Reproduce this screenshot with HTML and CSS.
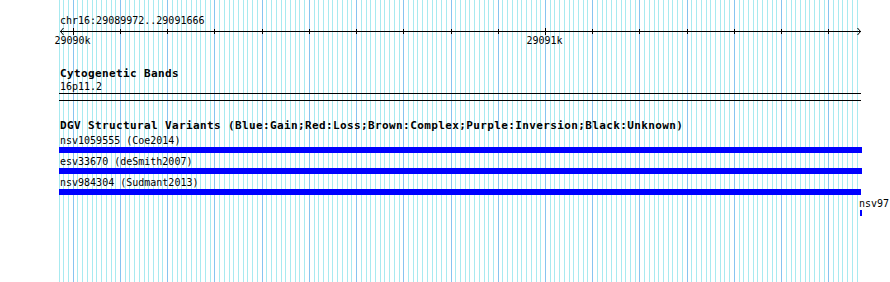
FILE: index.html
```html
<!DOCTYPE html>
<html lang="en">
<head>
    <meta charset="UTF-8">
    <title>chr16:29089972..29091666</title>
    <link rel="stylesheet" href="styles.css">
</head>
<body>
    <div class="panel">
        <svg class="grid" id="grid" width="890" height="282"></svg>

        <svg class="ruler" id="ruler" width="890" height="48">
            <text class="ruler-title" x="60" y="24">chr16:29089972..29091666</text>
            <rect x="60" y="31" width="801" height="1" fill="#000"/>
            <polyline points="63.5,28 60.5,31.5 63.5,35" fill="none" stroke="#000"/>
            <polyline points="857.5,28 860.5,31.5 857.5,35" fill="none" stroke="#000"/>
        </svg>

        <div class="track cyto">
            <div class="track-title">Cytogenetic Bands</div>
            <div class="feature-label">16p11.2</div>
            <div class="band"></div>
        </div>

        <div class="track dgv">
            <div class="track-title">DGV Structural Variants (Blue:Gain;Red:Loss;Brown:Complex;Purple:Inversion;Black:Unknown)</div>
            <div class="feature">
                <div class="feature-label">nsv1059555 (Coe2014)</div>
                <div class="feature-bar" style="margin-left: 59px; width: 803px;"></div>
            </div>
            <div class="feature">
                <div class="feature-label">esv33670 (deSmith2007)</div>
                <div class="feature-bar" style="margin-left: 59px; width: 803px;"></div>
            </div>
            <div class="feature">
                <div class="feature-label">nsv984304 (Sudmant2013)</div>
                <div class="feature-bar" style="margin-left: 59px; width: 802px;"></div>
            </div>
            <div class="feature">
                <div class="feature-label" style="margin-left: 859px;">nsv97</div>
                <div class="feature-bar" style="margin-left: 860px; width: 2px;"></div>
            </div>
        </div>
    </div>

    <script>
        const START = 29089972;
        const END = 29091666;
        const LEFT = 60;
        const WIDTH = 800;
        const scale = WIDTH / (END - START);
        const SVG = 'http://www.w3.org/2000/svg';

        function toX(bp) {
            return Math.floor(LEFT + (bp - START) * scale);
        }

        function addRect(svg, x, y, w, h, color) {
            const r = document.createElementNS(SVG, 'rect');
            r.setAttribute('x', x);
            r.setAttribute('y', y);
            r.setAttribute('width', w);
            r.setAttribute('height', h);
            r.setAttribute('fill', color);
            svg.appendChild(r);
        }

        // Grid: minor line every 10bp, major every 100bp
        const grid = document.getElementById('grid');
        for (let bp = Math.floor(START / 10) * 10; bp <= END; bp += 10) {
            const major = bp % 100 === 0;
            addRect(grid, toX(bp), 0, 1, 282, major ? '#87c4f0' : '#a8eaf0');
        }

        // Ruler ticks and labels
        const ruler = document.getElementById('ruler');
        for (let bp = Math.ceil(START / 100) * 100; bp <= END; bp += 100) {
            const x = toX(bp);
            if (bp % 1000 === 0) {
                addRect(ruler, x, 28, 1, 7, '#000');
                const t = document.createElementNS(SVG, 'text');
                t.setAttribute('x', x - 0.5);
                t.setAttribute('y', 44);
                t.setAttribute('class', 'tick-label');
                t.textContent = (bp / 1000) + 'k';
                ruler.appendChild(t);
            } else {
                addRect(ruler, x, 29, 1, 5, '#000');
            }
        }
    </script>
</body>
</html>
```

FILE: styles.css
```css
body {
    margin: 0;
    background: #ffffff;
    font-family: "DejaVu Sans Mono", monospace;
    font-size: 10px;
    color: #000;
}
.panel {
    position: relative;
    width: 890px;
    height: 282px;
    overflow: hidden;
}
.grid {
    position: absolute;
    top: 0;
    left: 0;
}
.ruler {
    position: relative;
    display: block;
}
.ruler text {
    font-family: "DejaVu Sans Mono", monospace;
    font-size: 10px;
    fill: #000;
}
.ruler .tick-label {
    text-anchor: middle;
}
.track {
    position: relative;
}
.track.cyto {
    margin-top: 20px;
}
.track.dgv {
    margin-top: 19px;
}
.track-title {
    margin-left: 60px;
    font-weight: bold;
    font-size: 11px;
    letter-spacing: 0.38px;
    line-height: 12px;
    white-space: nowrap;
}
.feature-label {
    margin-left: 60px;
    line-height: 13px;
    white-space: nowrap;
}
.band {
    margin-left: 59px;
    width: 802px;
    height: 6px;
    border-top: 1px solid #000;
    border-bottom: 1px solid #000;
}
.track-title + .feature {
    margin-top: 2px;
}
.feature {
    padding-bottom: 2px;
}
.feature-bar {
    height: 6px;
    background: #0000ff;
}
```
